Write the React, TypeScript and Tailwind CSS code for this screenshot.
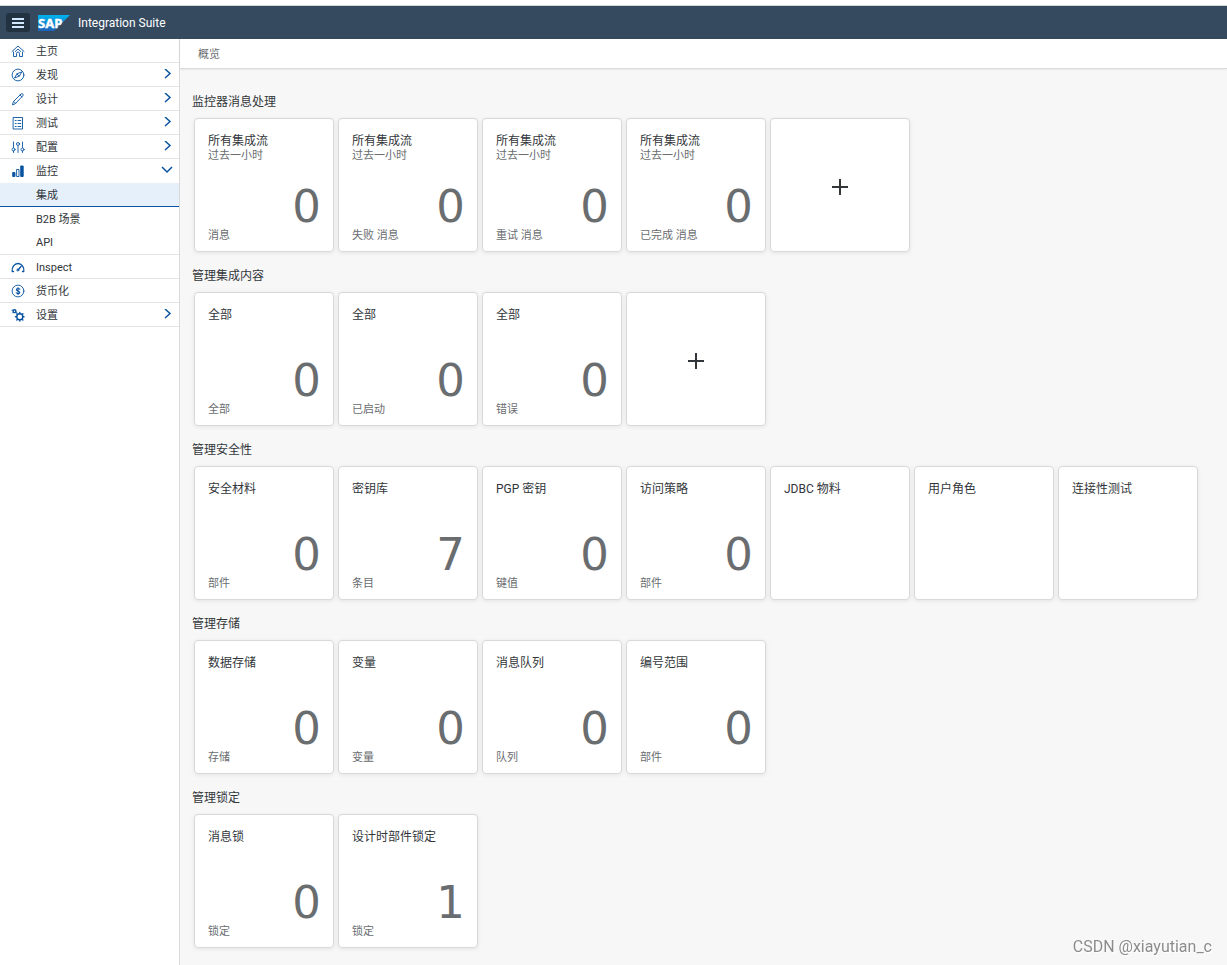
import { useState } from 'react';
import type { ReactNode } from 'react';

interface NavItem {
  id: string;
  label: string;
  icon: ReactNode;
  expandable?: boolean;
  children?: string[];
}

interface Tile {
  title: string;
  subtitle?: string;
  value?: string;
  footer?: string;
}

interface Section {
  title: string;
  tiles: Tile[];
  canAdd?: boolean;
}

function Icon({ children }: { children: ReactNode }) {
  return (
    <svg
      viewBox="0 0 14 14"
      className="h-[14px] w-[14px] shrink-0 text-[#0854a0]"
      fill="none"
      stroke="currentColor"
      strokeWidth="0.9"
      strokeLinecap="round"
      strokeLinejoin="round"
      aria-hidden="true"
    >
      {children}
    </svg>
  );
}

const NAV: NavItem[] = [
  {
    id: 'home',
    label: '主页',
    icon: (
      <Icon>
        <path d="M1 7.5 7 2l6 5.5M2.5 8v4.5h3v-3a1.5 1.5 0 0 1 3 0v3h3V8M4.3 7.500 7 5l2.700 2.500" />
      </Icon>
    ),
  },
  {
    id: 'discover',
    label: '发现',
    expandable: true,
    icon: (
      <Icon>
        <circle cx="7" cy="7" r="5.9" />
        <path d="M10.5 4 6 5.8 3.5 10 8 8.200ZM6 5.800l2 2.400" />
      </Icon>
    ),
  },
  {
    id: 'design',
    label: '设计',
    expandable: true,
    icon: (
      <Icon>
        <path d="M1.5 12.5l1-3L10 2q1-.8 1.800 0t0 1.800L4.500 11.500ZM2.800 9.500l1.700 1.700M9 3l2 2" />
      </Icon>
    ),
  },
  {
    id: 'test',
    label: '测试',
    expandable: true,
    icon: (
      <Icon>
        <path d="M2.5 1.5h9V13h-9ZM4.2 4.500h1M4.200 7.500h1M4.200 10.500h1M7 4.500h2.800M7 7.500h2.800M7 10.500h2.800" />
      </Icon>
    ),
  },
  {
    id: 'configure',
    label: '配置',
    expandable: true,
    icon: (
      <Icon>
        <path d="M2.5 2v5.5M7 6.5v6M11.5 2v5.5M2.5 11v1.5M11.5 11v1.5" />
        <circle cx="2.5" cy="9.5" r="1.5" />
        <circle cx="7" cy="4" r="1.5" />
        <circle cx="11.5" cy="9.5" r="1.5" />
      </Icon>
    ),
  },
  {
    id: 'monitor',
    label: '监控',
    expandable: true,
    children: ['集成', 'B2B 场景', 'API'],
    icon: (
      <Icon>
        <path d="M2 8.5h2v4H2ZM10 2h2.2v10.5H10Z" fill="currentColor" />
        <path d="M6 5.5h2v7H6Z" />
      </Icon>
    ),
  },
  {
    id: 'inspect',
    label: 'Inspect',
    icon: (
      <Icon>
        <path d="M2.5 11.5H1.2C.5 7 3.5 3.500 7 3.500S13.500 7 12.800 11.500H11.500M7 10l3-3.500" strokeWidth="1.3" />
        <circle cx="6.8" cy="10" r="1" />
      </Icon>
    ),
  },
  {
    id: 'monetize',
    label: '货币化',
    icon: (
      <Icon>
        <circle cx="7" cy="7" r="5.9" />
        <path d="M8.8 5.2C8 4.2 5.4 4.300 5.400 5.700S8.800 6.900 8.800 8.500 6 9.900 5.200 8.800M7 3.500v7" strokeWidth="1.1" />
      </Icon>
    ),
  },
  {
    id: 'settings',
    label: '设置',
    expandable: true,
    icon: (
      <Icon>
        <circle cx="8.8" cy="8.8" r="3" strokeWidth="1.4" />
        <path
          d="M8.8 4.5v1M8.8 12v1M4.5 8.8h1M12 8.8h1M5.8 5.8l.7.7M11.2 11.2l.7.7M5.8 11.9l.7-.7M11.2 6.5l.7-.7"
          strokeWidth="1.4"
        />
        <circle cx="3.5" cy="3.2" r="1.4" strokeWidth="1.4" />
        <path d="M1 2.2h1M1.5 5l.6-.6M5 4l1 .5" />
      </Icon>
    ),
  },
];

const hourly = (footer: string): Tile => ({ title: '所有集成流', subtitle: '过去一小时', value: '0', footer });

const SECTIONS: Section[] = [
  {
    title: '监控器消息处理',
    tiles: [hourly('消息'), hourly('失败 消息'), hourly('重试 消息'), hourly('已完成 消息')],
    canAdd: true,
  },
  {
    title: '管理集成内容',
    tiles: [
      { title: '全部', value: '0', footer: '全部' },
      { title: '全部', value: '0', footer: '已启动' },
      { title: '全部', value: '0', footer: '错误' },
    ],
    canAdd: true,
  },
  {
    title: '管理安全性',
    tiles: [
      { title: '安全材料', value: '0', footer: '部件' },
      { title: '密钥库', value: '7', footer: '条目' },
      { title: 'PGP 密钥', value: '0', footer: '键值' },
      { title: '访问策略', value: '0', footer: '部件' },
      { title: 'JDBC 物料' },
      { title: '用户角色' },
      { title: '连接性测试' },
    ],
  },
  {
    title: '管理存储',
    tiles: [
      { title: '数据存储', value: '0', footer: '存储' },
      { title: '变量', value: '0', footer: '变量' },
      { title: '消息队列', value: '0', footer: '队列' },
      { title: '编号范围', value: '0', footer: '部件' },
    ],
  },
  {
    title: '管理锁定',
    tiles: [
      { title: '消息锁', value: '0', footer: '锁定' },
      { title: '设计时部件锁定', value: '1', footer: '锁定' },
    ],
  },
];

function Header() {
  return (
    <header className="flex h-[33px] shrink-0 items-center bg-[#354a5f] pl-[6px]">
      <button
        type="button"
        aria-label="Menu"
        className="flex h-[19px] w-[24px] items-center justify-center rounded-[3px] bg-[#233240]"
      >
        <svg viewBox="0 0 14 10" className="h-[10px] w-[14px]" fill="#d1e8ff" aria-hidden="true">
          <path d="M1 0h12v2H1ZM1 4h12v2H1ZM1 8h12v2H1Z" />
        </svg>
      </button>
      <a href="#" className="ml-2" aria-label="SAP">
        <svg viewBox="0 0 32 16" className="h-4 w-8">
          <defs>
            <linearGradient id="sap" x1="0" y1="0" x2="0" y2="1">
              <stop offset="0" stopColor="#00b4ee" />
              <stop offset="1" stopColor="#1c62b8" />
            </linearGradient>
          </defs>
          <path d="M0 0h32L16 16H0Z" fill="url(#sap)" />
          <text
            x="0"
            y="13"
            fill="#fff"
            stroke="#fff"
            strokeWidth="0.4"
            fontSize="13"
            fontWeight="700"
            fontFamily="Noto Sans, sans-serif"
          >
            SAP
          </text>
        </svg>
      </a>
      <h1 className="ml-2 text-[12px] leading-4 text-white">Integration Suite</h1>
    </header>
  );
}

function Chevron({ open }: { open: boolean }) {
  return (
    <svg
      viewBox="0 0 12 12"
      className="ml-auto h-3 w-3"
      fill="none"
      stroke="#0854a0"
      strokeWidth="1.5"
      aria-hidden="true"
    >
      <path d={open ? 'M1 2l5 5 5-5' : 'M4 0l5 4.5L4 9'} />
    </svg>
  );
}

function Sidebar() {
  const [expanded, setExpanded] = useState('monitor');
  const [selected, setSelected] = useState('集成');

  return (
    <nav className="w-[180px] shrink-0 border-r border-[#d9d9d9] bg-white text-[11px] leading-4 text-[#32363a]">
      <ul>
        {NAV.map((item) => {
          const open = expanded === item.id && !!item.children;
          return (
            <li key={item.id} className="border-b border-[#e4e4e4]">
              <button
                type="button"
                aria-expanded={item.expandable ? open : undefined}
                onClick={() => item.expandable && setExpanded(open ? '' : item.id)}
                className={`flex w-full items-center pr-[6px] pl-[11px] text-left ${open ? 'h-6' : 'h-[23px]'}`}
              >
                {item.icon}
                <span className="ml-[11px] pt-[2px]">{item.label}</span>
                {item.expandable && <Chevron open={open} />}
              </button>
              {open && (
                <ul>
                  {item.children?.map((child) => (
                    <li key={child} className="group">
                      <a
                        href="#"
                        onClick={() => setSelected(child)}
                        className={`flex h-6 items-center border-b pt-[2px] pl-9 group-last:h-[23px] ${
                          selected === child ? 'border-[#0854a0] bg-[#e5f0fa]' : 'border-transparent'
                        }`}
                      >
                        {child}
                      </a>
                    </li>
                  ))}
                </ul>
              )}
            </li>
          );
        })}
      </ul>
    </nav>
  );
}

const tileBox = 'h-[134px] w-[140px] rounded-[4px] border border-[#d9d9d9] bg-white shadow-[0_1px_4px_rgba(0,0,0,0.08)]';

function TileCard({ tile }: { tile: Tile }) {
  return (
    <a href="#" className={`${tileBox} flex flex-col pt-[14px] pr-3 pb-[7px] pl-[13px]`}>
      <h3 className="text-[12px] leading-4 text-[#32363a]">{tile.title}</h3>
      {tile.subtitle && <p className="text-[11px] leading-[14px] text-[#6a6d70]">{tile.subtitle}</p>}
      <div className="mt-auto">
        {tile.value && (
          <p className="text-right font-['DejaVu_Sans',sans-serif] text-[45px] leading-[42px] text-[#6a6d70]">
            {tile.value}
          </p>
        )}
        <p className="text-[11px] leading-4 text-[#6a6d70]">{tile.footer}</p>
      </div>
    </a>
  );
}

function AddTile() {
  return (
    <button type="button" aria-label="Add tile" className={`${tileBox} flex items-center justify-center pt-1`}>
      <svg viewBox="0 0 16 16" className="h-4 w-4" fill="#32363a" aria-hidden="true">
        <path d="M7 0h2v7h7v2H9v7H7V9H0V7h7Z" />
      </svg>
    </button>
  );
}

export default function App() {
  return (
    <div className="flex min-h-screen flex-col bg-[#f7f7f7] font-['Roboto','Noto_Sans_CJK_SC',sans-serif]">
      <div className="h-[6px] shrink-0 border-b border-[#d5d8db] bg-white" />
      <Header />
      <div className="flex grow">
        <Sidebar />
        <main className="min-w-0 grow">
          <div className="flex h-[30px] items-center border-b border-[#d9d9d9] bg-white pt-1 pl-[18px] text-[11px] text-[#6a6d70] shadow-[0_1px_2px_rgba(0,0,0,0.06)]">
            概览
          </div>
          <div className="flex flex-col gap-4 pt-[25px] pl-3">
            {SECTIONS.map((section) => (
              <section key={section.title}>
                <h2 className="text-[12px] leading-4 text-[#32363a]">{section.title}</h2>
                <div className="mt-2 flex flex-wrap gap-1 pl-[2px]">
                  {section.tiles.map((tile, i) => (
                    <TileCard key={i} tile={tile} />
                  ))}
                  {section.canAdd && <AddTile />}
                </div>
              </section>
            ))}
          </div>
        </main>
      </div>
      <div className="fixed right-[15px] bottom-2 text-[16px] leading-5 text-[#8c8c8c] [text-shadow:1px_1px_0_#fff]">
        CSDN @xiayutian_c
      </div>
    </div>
  );
}
